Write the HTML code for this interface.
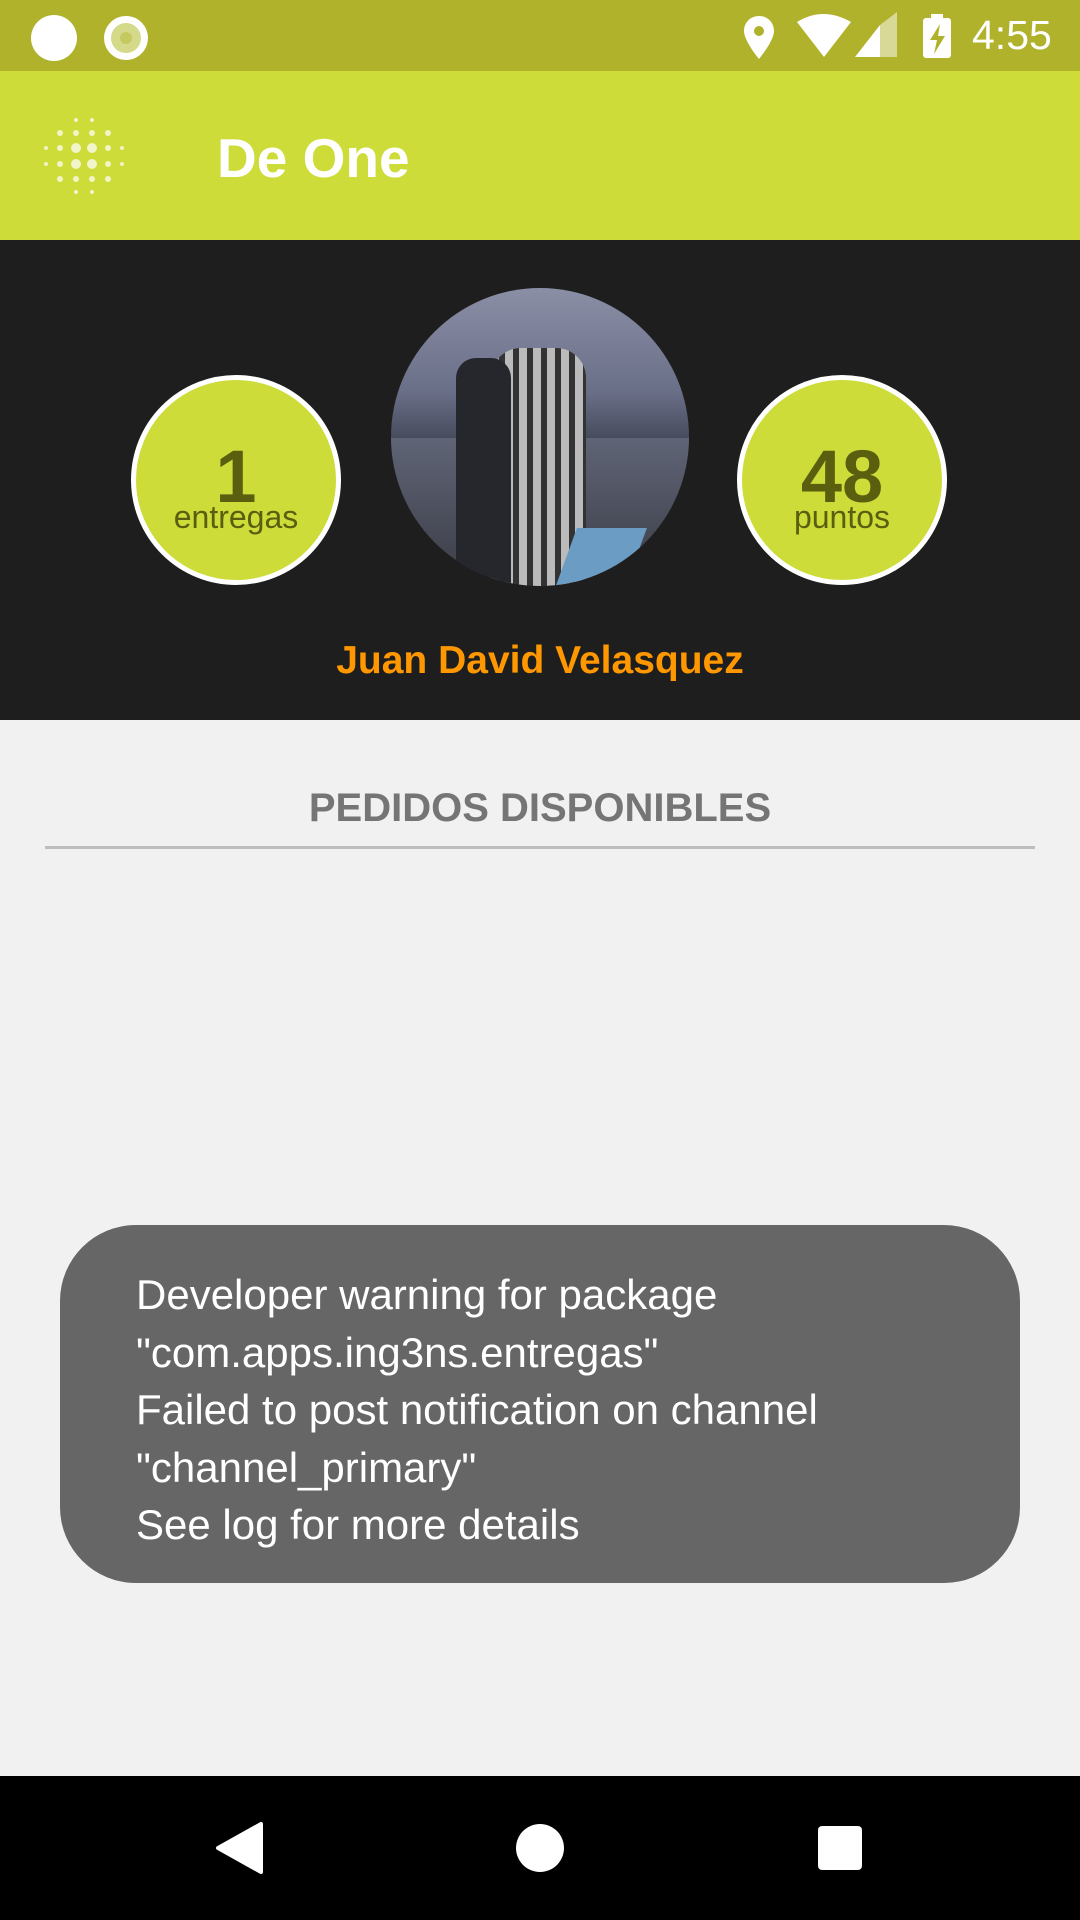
<!DOCTYPE html>
<html><head><meta charset="utf-8"><style>
*{margin:0;padding:0;box-sizing:border-box}
body{width:1080px;height:1920px;background:#f1f1f1;position:relative;overflow:hidden;font-family:"Liberation Sans",sans-serif}
.abs{position:absolute}
.stat{top:0;left:0;width:1080px;height:71px;background:#b0b22c}
.bar{top:71px;left:0;width:1080px;height:169px;background:#cddc39}
.dark{top:240px;left:0;width:1080px;height:480px;background:#1e1e1e}
.circ{width:210px;height:210px;border-radius:50%;background:#cddc39;border:5px solid #fff;text-align:center;color:#5a5f10}
.circ b{display:block;font-size:74px;line-height:74px;margin-top:60px;font-weight:bold}
.circ span{display:block;font-size:32px;line-height:30px;margin-top:-12px}
.toast{left:60px;top:1225px;width:960px;height:358px;border-radius:76px;background:#666;color:#fff;font-family:"Liberation Sans Narrow","Liberation Sans",sans-serif;font-size:42px;line-height:57.5px;padding:41px 0 0 76px}
.nav{left:0;top:1776px;width:1080px;height:144px;background:#000}
</style></head><body>
<div class="abs stat"></div>
<div class="abs" style="left:31px;top:15px;width:46px;height:46px;border-radius:50%;background:#fff"></div>
<div class="abs" style="left:104px;top:16px;width:44px;height:44px;border-radius:50%;background:#fff"></div>
<div class="abs" style="left:111px;top:23px;width:30px;height:30px;border-radius:50%;background:#d5d98a"></div>
<div class="abs" style="left:120px;top:32px;width:12px;height:12px;border-radius:50%;background:#c4ca60"></div>
<svg class="abs" style="left:735px;top:12px" width="240" height="50" viewBox="0 0 240 50">
<path d="M24 4c-9 0-15 7-15 15 0 10 15 28 15 28s15-18 15-28c0-8-6-15-15-15zm0 20a5 5 0 1 1 0-10 5 5 0 0 1 0 10z" fill="#fff"/>
<path d="M62 10 Q88 -6 116 10 L89 45Z" fill="#fff"/>
<path d="M120 45 L145 13 L145 45Z" fill="#fff"/>
<path d="M145 13 L162 0 L162 45 L145 45Z" fill="#fff" opacity=".5"/>
<rect x="188" y="6" width="28" height="40" rx="3" fill="#fff"/>
<rect x="196" y="2" width="12" height="6" fill="#fff"/>
<path d="M205 12 L195 28 L202 28 L199 42 L210 24 L203 24Z" fill="#b0b22c"/>
</svg>
<div class="abs" style="left:972px;top:12px;color:#fff;font-size:41px">4:55</div>
<div class="abs bar"></div>
<svg class="abs" style="left:44px;top:116px" width="80" height="80" viewBox="0 0 80 80" fill="#f1f5c8">
<g>
<circle cx="32" cy="4" r="2"/><circle cx="48" cy="4" r="2"/>
<circle cx="16" cy="17" r="3"/><circle cx="32" cy="17" r="3"/><circle cx="48" cy="17" r="3"/><circle cx="64" cy="17" r="3"/>
<circle cx="2" cy="32" r="2"/><circle cx="16" cy="32" r="3"/><circle cx="32" cy="32" r="5"/><circle cx="48" cy="32" r="5"/><circle cx="64" cy="32" r="3"/><circle cx="78" cy="32" r="2"/>
<circle cx="2" cy="48" r="2"/><circle cx="16" cy="48" r="3"/><circle cx="32" cy="48" r="5"/><circle cx="48" cy="48" r="5"/><circle cx="64" cy="48" r="3"/><circle cx="78" cy="48" r="2"/>
<circle cx="16" cy="63" r="3"/><circle cx="32" cy="63" r="3"/><circle cx="48" cy="63" r="3"/><circle cx="64" cy="63" r="3"/>
<circle cx="32" cy="76" r="2"/><circle cx="48" cy="76" r="2"/>
</g></svg>
<div class="abs" style="left:217px;top:126px;color:#fff;font-size:55px;font-weight:bold">De One</div>
<div class="abs dark"></div>
<div class="abs circ" style="left:131px;top:375px"><b>1</b><span>entregas</span></div>
<div class="abs circ" style="left:737px;top:375px"><b>48</b><span>puntos</span></div>
<div class="abs" style="left:391px;top:288px;width:298px;height:298px;border-radius:50%;overflow:hidden;background:linear-gradient(180deg,#8a8fa6 0%,#6a6f88 35%,#3c4150 55%,#2a2d35 100%)">
<div class="abs" style="left:0;top:150px;width:298px;height:148px;background:linear-gradient(180deg,#5f6476,#3a3c45)"></div>
<div class="abs" style="left:100px;top:60px;width:95px;height:240px;border-radius:30px 30px 0 0;background:repeating-linear-gradient(90deg,#bbb 0 8px,#333 8px 14px)"></div>
<div class="abs" style="left:65px;top:70px;width:55px;height:230px;background:#26272c;border-radius:20px 20px 0 0"></div>
<div class="abs" style="left:175px;top:240px;width:70px;height:60px;background:#6a9cc4;transform:skewX(-20deg)"></div>
</div>
<div class="abs" style="left:0;top:639px;width:1080px;text-align:center;color:#ff9800;font-size:39px;font-weight:bold">Juan David Velasquez</div>
<div class="abs" style="left:0;top:786px;width:1080px;text-align:center;color:#757575;font-size:40px;font-weight:bold">PEDIDOS DISPONIBLES</div>
<div class="abs" style="left:45px;top:846px;width:990px;height:3px;background:#bdbdbd"></div>
<div class="abs toast">Developer warning for package<br>"com.apps.ing3ns.entregas"<br>Failed to post notification on channel<br>"channel_primary"<br>See log for more details</div>
<div class="abs nav"></div>
<svg class="abs" style="left:0;top:1776px" width="1080" height="144">
<path d="M218 72 L261 48 L261 96Z" fill="#fff" stroke="#fff" stroke-width="4" stroke-linejoin="round"/>
<circle cx="540" cy="72" r="24" fill="#fff"/>
<rect x="818" y="50" width="44" height="44" rx="4" fill="#fff"/>
</svg>
</body></html>
